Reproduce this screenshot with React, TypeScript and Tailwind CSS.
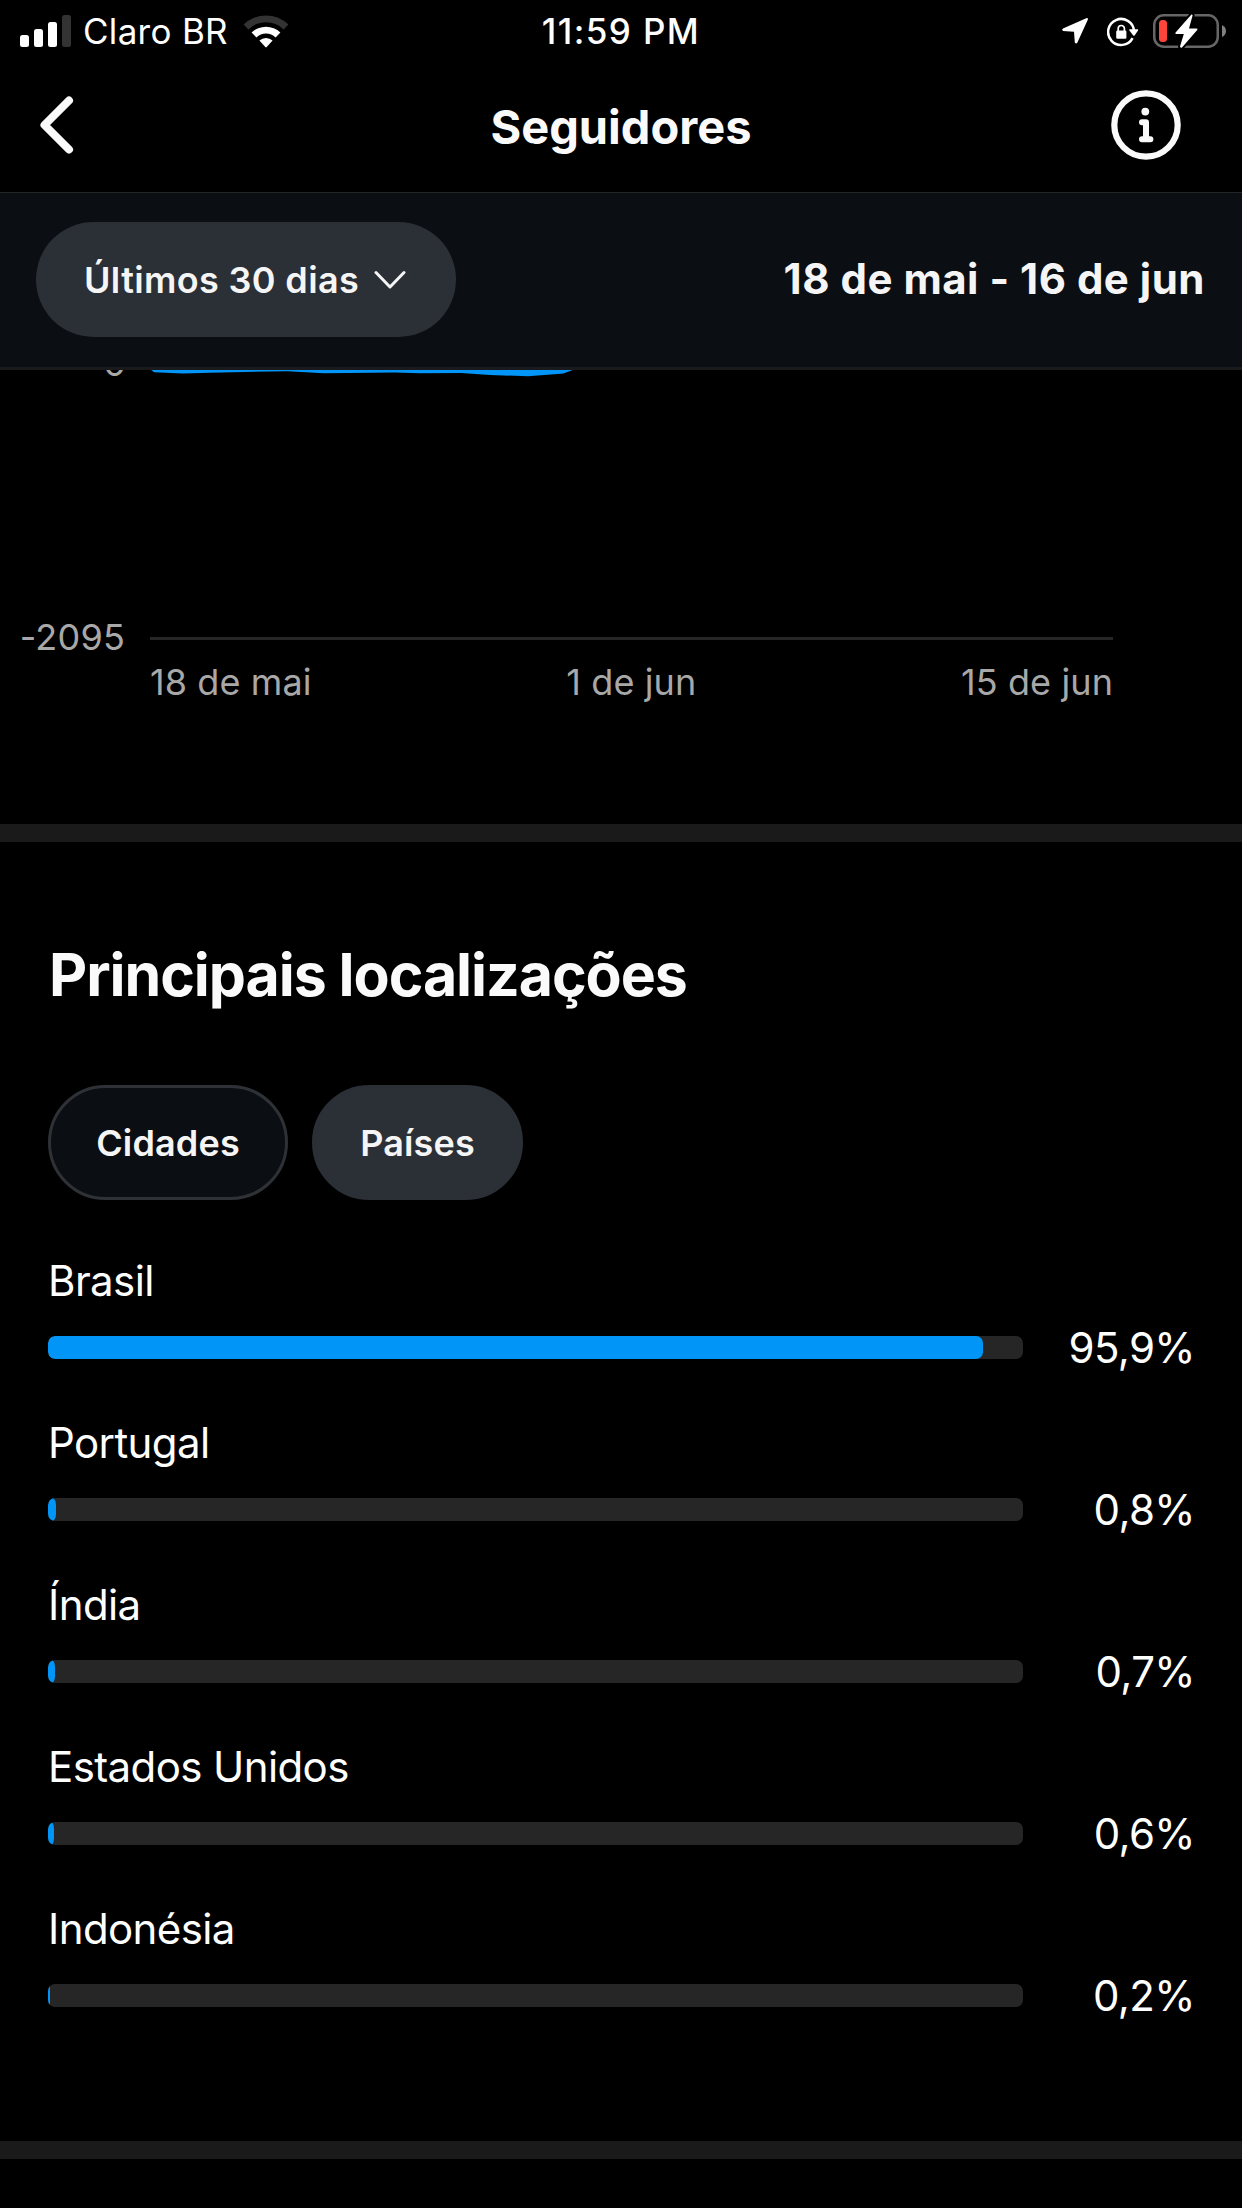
import { useState } from 'react';

interface Localizacao {
  nome: string;
  valor: number;
  rotulo: string;
}

const PAISES: Localizacao[] = [
  { nome: 'Brasil', valor: 95.9, rotulo: '95,9%' },
  { nome: 'Portugal', valor: 0.8, rotulo: '0,8%' },
  { nome: 'Índia', valor: 0.7, rotulo: '0,7%' },
  { nome: 'Estados Unidos', valor: 0.6, rotulo: '0,6%' },
  { nome: 'Indonésia', valor: 0.2, rotulo: '0,2%' },
];

function SignalIcon() {
  return (
    <svg width="51" height="32" viewBox="0 0 51 32" fill="#fff">
      <rect x="0" y="20" width="9" height="12" rx="2.5" />
      <rect x="14" y="14" width="9" height="18" rx="2.5" />
      <rect x="28" y="7" width="9" height="25" rx="2.5" />
      <rect x="42" y="0" width="9" height="32" rx="2.5" fill="#333" />
    </svg>
  );
}

function WifiIcon() {
  return (
    <svg width="46" height="33" viewBox="0 0 46 33" fill="#fff">
      <path d="M0.6 9.6A32 32 0 0 1 45.4 9.6L40.6 14.4A25.2 25.2 0 0 0 5.4 14.4Z" fill="#333" />
      <path d="M8.6 17.6A20.5 20.5 0 0 1 37.4 17.6L32.6 22.4A13.7 13.7 0 0 0 13.4 22.4Z" />
      <path d="M16.4 25.6A9.4 9.4 0 0 1 29.6 25.6L23.7 32Q23 32.8 22.3 32Z" />
    </svg>
  );
}

function LocationIcon() {
  return (
    <svg width="28" height="28" viewBox="0 0 28 28" fill="#fff">
      <path d="M25.2 1.2Q27.6 0.4 26.8 2.8L16.4 25.6Q15.2 27.6 13.8 25.6L13 14.8L2 13.9Q0.2 12.8 2 11.5Z" />
    </svg>
  );
}

function RotationLockIcon() {
  return (
    <svg width="32" height="30" viewBox="0 0 32 30" fill="none">
      <path d="M27.1 14A13 13 0 1 0 25.6 21.1" stroke="#fff" strokeWidth="2.5" />
      <path d="M22.6 12.2H30.6Q31.6 12.4 31 13.4L27.6 18.4Q26.9 19.1 26.2 18.4L22.4 13.4Q21.8 12.4 22.6 12.2Z" fill="#fff" />
      <rect x="9.2" y="13.4" width="10.2" height="8.4" rx="1.4" fill="#fff" />
      <path d="M11.2 14V11.6A3.1 3.1 0 0 1 17.4 11.6V14" stroke="#fff" strokeWidth="1.7" />
    </svg>
  );
}

function BatteryIcon() {
  return (
    <svg width="74" height="38" viewBox="0 0 74 38" fill="none">
      <rect x="1.25" y="3.25" width="63.5" height="31.5" rx="9.5" stroke="#666" strokeWidth="2.5" />
      <path d="M69 13Q73 15 73 19Q73 23 69 25Z" fill="#808080" />
      <rect x="6" y="8" width="8" height="22" rx="3.5" fill="#ff453a" />
      <path
        d="M38.4 2.6L22.6 20.4Q21.6 21.8 23.2 21.9H30.8L27 34.6Q27.4 36.4 29 35.4L44.2 18Q45.2 16.7 43.6 16.6H36L39.6 3.6Q39.4 2 38.4 2.6Z"
        fill="#fff"
        stroke="#000"
        strokeWidth="4"
        paintOrder="stroke"
      />
    </svg>
  );
}

function BackIcon() {
  return (
    <svg width="34" height="58" viewBox="0 0 34 58" fill="none" stroke="#fafafa" strokeWidth="8" strokeLinecap="round" strokeLinejoin="round">
      <path d="M29 4.5L4.5 29L29 53.5" />
    </svg>
  );
}

function InfoIcon() {
  return (
    <svg width="70" height="70" viewBox="0 0 70 70" fill="none">
      <circle cx="35" cy="35" r="31.7" stroke="#fafafa" strokeWidth="6.2" />
      <circle cx="34.3" cy="21.6" r="3.9" fill="#fafafa" />
      <path d="M31 32.2H35V49M31 49.2H39.4" stroke="#fafafa" strokeWidth="6" strokeLinecap="round" strokeLinejoin="round" />
    </svg>
  );
}

function StatusBar() {
  return (
    <div className="grid h-[62px] grid-cols-3 items-center text-[35px] leading-none text-white">
      <div className="flex items-center pl-5">
        <SignalIcon />
        <span className="ml-3 mr-[15px] whitespace-nowrap pt-px tracking-[0.3px]">Claro BR</span>
        <WifiIcon />
      </div>
      <span className="pt-px text-center font-medium tracking-[1.4px]">11:59 PM</span>
      <div className="flex items-center justify-end pr-[15px]">
        <LocationIcon />
        <span className="ml-[18px] mr-[14px] pt-[2px]">
          <RotationLockIcon />
        </span>
        <BatteryIcon />
      </div>
    </div>
  );
}

function NavBar() {
  return (
    <header className="flex h-[131px] items-center justify-between border-b border-[#262626] pb-1 pl-10 pr-[61px]">
      <button type="button" className="w-[91px]" aria-label="Voltar">
        <BackIcon />
      </button>
      <h1 className="pt-[2px] text-[47px] font-bold leading-none text-[#fafafa]">Seguidores</h1>
      <button type="button" aria-label="Informações">
        <InfoIcon />
      </button>
    </header>
  );
}

function PeriodBar() {
  return (
    <div className="relative z-10 flex h-[177px] items-center justify-between border-b-[3px] border-[#1a1a1c] bg-[#0b0e12] pb-px pl-9 pr-[37px]">
      <button
        type="button"
        className="flex h-[115px] w-[420px] items-center rounded-full bg-[#2b2f36] pl-12 text-[36px] font-[570] leading-none tracking-[0.35px] text-[#f5f5f5]"
      >
        <span className="whitespace-nowrap">Últimos 30 dias</span>
        <svg className="ml-[15px]" width="32" height="20" viewBox="0 0 32 20" fill="none" stroke="#f5f5f5" strokeWidth="3" strokeLinecap="round" strokeLinejoin="round">
          <path d="M2 2.5L16 17L30 2.5" />
        </svg>
      </button>
      <p className="pb-px text-[42px] font-bold leading-none tracking-[0.5px] text-[#f5f5f5]">18 de mai - 16 de jun</p>
    </div>
  );
}

// The top of the chart stays under the period bar
function FollowersChart() {
  return (
    <section className="-mt-[25px] h-[479px] text-[36px] leading-none text-[#a8a8a8]">
      <div className="flex h-9 items-center">
        <span className="w-[126px] text-right">0</span>
        <svg className="ml-6" width="963" height="36" viewBox="0 0 963 36">
          <path
            d="M0 20L1.4 25L4 27.3L33 28.5L60 27.7L137 26.2L174 28.2L245 27.5L270 28.3L311 28L340 30L378 31.3L413.5 28.5L422 25.2L426 20Z"
            fill="#0095f6"
          />
        </svg>
      </div>
      <div className="mt-[238px] flex h-9 items-center">
        <span className="w-[125px] text-right tracking-[0.2px]">-2095</span>
        <div className="ml-[25px] mt-[3px] h-[3px] w-[963px] bg-[#262626]" />
      </div>
      <div className="ml-[150px] mt-[9px] flex w-[963px] justify-between tracking-[0.1px]">
        <span>18 de mai</span>
        <span className="mr-[10px]">1 de jun</span>
        <span>15 de jun</span>
      </div>
    </section>
  );
}

function LocationRow({ item }: { item: Localizacao }) {
  // slivers narrower than the corner radius get an elliptical cap
  const canto = item.valor < 1.5 ? 'rounded-[50%_/_7px]' : 'rounded-[7px]';

  return (
    <li className="tracking-[-0.6px]">
      <p className="text-[42px] leading-[50px]">{item.nome}</p>
      <div className="mt-4 flex h-[50px] items-center justify-between">
        <div className="mt-px h-[23px] w-[975px] overflow-hidden rounded-[7px] bg-[#262626]">
          <div className={`h-full bg-[#0095f6] ${canto}`} style={{ width: `${item.valor}%` }} />
        </div>
        <span className="-mr-px pt-px text-[42px] leading-[50px]">{item.rotulo}</span>
      </div>
    </li>
  );
}

function TopLocations() {
  const [aba, setAba] = useState<'cidades' | 'paises'>('paises');
  const ativa = 'border-[#2b2f36] bg-[#2b2f36]';
  const inativa = 'border-[#2e3135] bg-[#0b0e12]';

  return (
    <section className="px-12 pb-[121px] pt-[97px] text-white">
      <h2 className="ml-px whitespace-nowrap text-[59px] font-bold leading-[72px] tracking-[-1.05px] text-[#fafafa]">
        Principais localizações
      </h2>
      <div className="mt-[74px] flex gap-6 text-[36px] font-[570] leading-none tracking-[0.15px] text-[#f5f5f5]">
        <button
          type="button"
          onClick={() => setAba('cidades')}
          className={`h-[115px] w-[240px] rounded-full border-[3px] ${aba === 'cidades' ? ativa : inativa}`}
        >
          Cidades
        </button>
        <button
          type="button"
          onClick={() => setAba('paises')}
          className={`h-[115px] w-[211px] rounded-full border-[3px] ${aba === 'paises' ? ativa : inativa}`}
        >
          Países
        </button>
      </div>
      <ul className="mt-14 flex flex-col gap-[46px]">
        {PAISES.map((p) => (
          <LocationRow key={p.nome} item={p} />
        ))}
      </ul>
    </section>
  );
}

export default function App() {
  return (
    <div className="h-[2208px] w-[1242px] overflow-hidden bg-black font-['Inter','Liberation_Sans',sans-serif]">
      <StatusBar />
      <NavBar />
      <PeriodBar />
      <FollowersChart />
      <div className="h-[18px] bg-[#1a1a1a]" />
      <TopLocations />
      <div className="h-[18px] bg-[#1a1a1a]" />
    </div>
  );
}
